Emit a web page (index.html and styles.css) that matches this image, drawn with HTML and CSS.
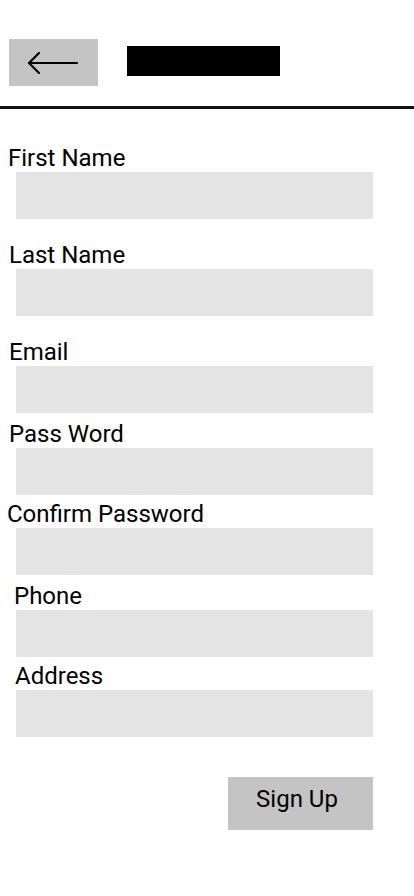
FILE: index.html
```html
<!DOCTYPE html>
<html lang="en">
<head>
<meta charset="utf-8">
<title>Sign Up</title>
<link rel="stylesheet" href="styles.css">
</head>
<body>
<header class="topbar">
  <button class="back" aria-label="Back">
    <svg width="52" height="24" viewBox="0 0 52 24" fill="none" stroke="#000" stroke-width="2.2" stroke-linecap="round" stroke-linejoin="round">
      <path d="M2 12 H50"/>
      <path d="M12 2 L2 12 L12 22"/>
    </svg>
  </button>
  <div class="title-block"></div>
</header>
<div class="divider"></div>
<form class="form">
  <div class="field f1"><label class="label l-a">First Name</label><div class="input"></div></div>
  <div class="field f2"><label class="label l-b">Last Name</label><div class="input"></div></div>
  <div class="field f2"><label class="label l-b">Email</label><div class="input"></div></div>
  <div class="field f3"><label class="label l-b">Pass Word</label><div class="input"></div></div>
  <div class="field f4"><label class="label l-c">Confirm Password</label><div class="input"></div></div>
  <div class="field f3"><label class="label l-d">Phone</label><div class="input"></div></div>
  <div class="field f4"><label class="label l-e">Address</label><div class="input"></div></div>
  <div class="actions"><button type="button" class="signup">Sign Up</button></div>
</form>
</body>
</html>
```
FILE: styles.css
```css
* { box-sizing: border-box; }
html, body { margin: 0; padding: 0; background: #fff; }
body { font-family: Roboto, "Noto Sans", sans-serif; color: #000; width: 414px; height: 896px; }

.topbar {
  display: flex;
  align-items: flex-start;
  gap: 29px;
  padding: 39px 0 20px 9px;
}
.back {
  width: 89px;
  height: 47px;
  background: #c4c4c4;
  border: 0;
  padding: 0;
  margin: 0;
  display: flex;
  align-items: center;
  justify-content: center;
}
.back svg { display: block; margin-left: -1px; }
.title-block {
  width: 153px;
  height: 30px;
  margin-top: 7px;
  background: #000;
}
.divider {
  height: 3px;
  background: #111;
}

.form {
  padding-top: 35px;
  display: flex;
  flex-direction: column;
}
.field { display: flex; flex-direction: column; }
.f1 { margin-top: 0; }
.f2 { margin-top: 22px; }
.f3 { margin-top: 7px; }
.f4 { margin-top: 5px; }
.label {
  font-size: 24px;
  line-height: 28px;
  font-weight: 400;
}
.l-a { padding-left: 8px; }
.l-b { padding-left: 9px; }
.l-c { padding-left: 7px; }
.l-d { padding-left: 14px; }
.l-e { padding-left: 15px; }
.input {
  margin-left: 16px;
  width: 357px;
  height: 47px;
  background: #e4e4e4;
}
.actions {
  display: flex;
  justify-content: flex-end;
  width: 373px;
  margin-top: 40px;
}
.signup {
  width: 145px;
  height: 53px;
  border: 0;
  background: #c4c4c4;
  font-family: Roboto, "Noto Sans", sans-serif;
  font-size: 24px;
  line-height: 28px;
  color: #000;
  padding: 0 7px 10px 0;
}
```
